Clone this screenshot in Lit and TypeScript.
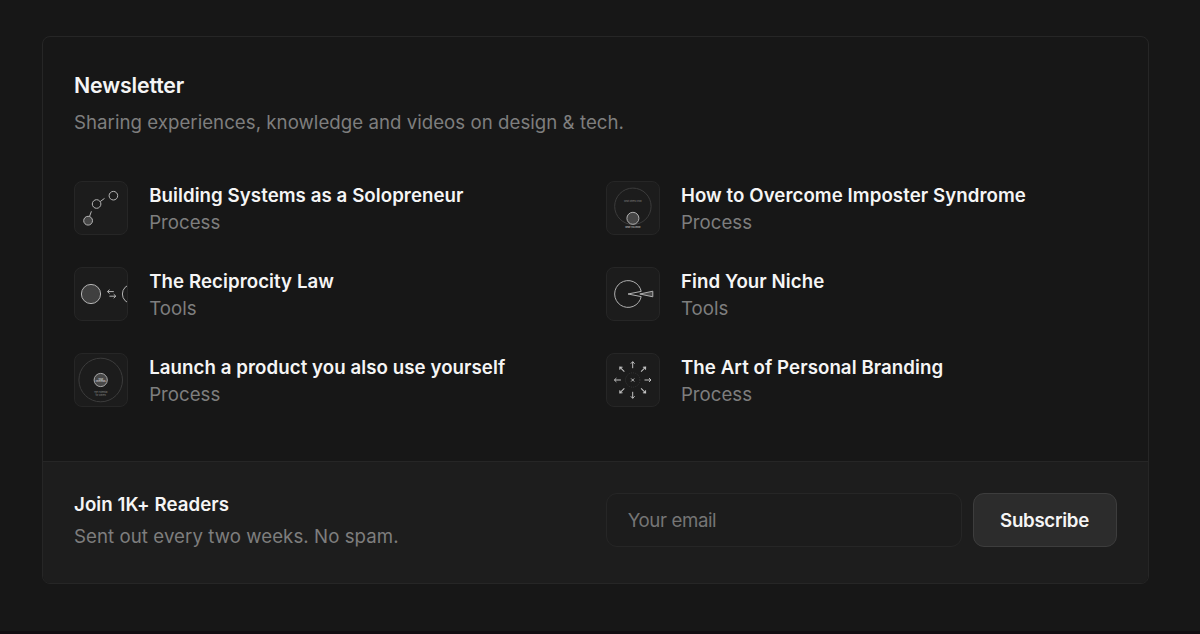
import { LitElement, html, css, svg } from "lit";
import { customElement } from "lit/decorators.js";

const nodes = svg`
  <g fill="none" stroke="#b4b4b4" stroke-width="1">
    <circle cx="39.4" cy="14.7" r="4.3"/><circle cx="22.6" cy="23" r="4.3"/>
    <circle cx="14.1" cy="39.7" r="4.4" fill="#464646"/>
    <path d="M26.3 20.5L30.5 17.4M15.6 35.3L17.4 30.3"/>
  </g>`;

const exchange = svg`
  <g fill="none" stroke="#b4b4b4" stroke-width="1">
    <circle cx="17" cy="27" r="9.6" fill="#404040"/><circle cx="58" cy="27" r="9.6"/>
    <path d="M33.5 24.6H39.8M35.6 22.6L33.5 24.6L35.6 26.6M35.4 29.2H41.8M39.7 27.2L41.8 29.2L39.7 31.2"/>
  </g>`;

const product = svg`
  <circle cx="26.7" cy="27" r="21.8" fill="none" stroke="#3c3c3c"/>
  <circle cx="26.7" cy="27" r="6.6" fill="#484848" stroke="#a8a8a8"/>
  <g text-anchor="middle" font-size="2.3" fill="#d0d0d0" font-weight="600">
    <text x="26.7" y="26.7">Your</text><text x="26.7" y="29">Interests</text>
  </g>
  <g text-anchor="middle" font-size="2.2" fill="#8a8a8a">
    <text x="26.7" y="40.3">The Potential</text><text x="26.7" y="43.1">for Others</text>
  </g>`;

const knowledge = svg`
  <circle cx="26.9" cy="25.3" r="18.2" fill="none" stroke="#3c3c3c"/>
  <circle cx="26.9" cy="37.3" r="6" fill="#464646" stroke="#b0b0b0"/>
  <g text-anchor="middle">
    <text x="26.9" y="21.2" font-size="2.1" fill="#858585">What others know</text>
    <text x="26.9" y="46.9" font-size="2.1" fill="#dedede">What you know</text>
  </g>`;

const niche = svg`
  <g fill="none" stroke="#b0b0b0" stroke-width="1" stroke-linejoin="round">
    <path d="M35.2 24.4A13.4 13.4 0 1 0 35.2 29.6L22 27Z"/>
    <path d="M33.8 27L46.8 24.2V29.8Z" fill="#484848"/>
  </g>`;

const branding = svg`
  <circle cx="26.7" cy="27" r="7.2" fill="none" stroke="#353535" stroke-dasharray="1 1"/>
  <g fill="none" stroke="#c2c2c2" stroke-width="1">
    <path d="M25.2 25.5L28.2 28.5M28.2 25.5L25.2 28.5"/>
    ${[0, 45, 90, 135, 180, 225, 270, 315].map(
      (a) => svg`<path transform="rotate(${a} 26.7 27)" d="M26.7 15.2V8.7M24.8 10.7L26.7 8.7L28.6 10.7"/>`
    )}
  </g>`;

const issues = [
  { title: "Building Systems as a Solopreneur", tag: "Process", art: nodes },
  { title: "How to Overcome Imposter Syndrome", tag: "Process", art: knowledge },
  { title: "The Reciprocity Law", tag: "Tools", art: exchange },
  { title: "Find Your Niche", tag: "Tools", art: niche },
  { title: "Launch a product you also use yourself", tag: "Process", art: product },
  { title: "The Art of Personal Branding", tag: "Process", art: branding },
];

@customElement("app-root")
export class AppRoot extends LitElement {
  static styles = css`
    :host {
      display: block;
      box-sizing: border-box;
      height: 634px;
      padding: 36px 51.5px 0 42px;
      background: #171717;
      border-bottom: 3px solid #120d11;
      font-family: Inter, sans-serif;
      font-size: 18.67px;
      line-height: 27px;
      color: #f5f5f5;
      overflow: hidden;
    }
    * { box-sizing: border-box; }
    .card {
      height: 548px;
      border: 1px solid #262626;
      border-radius: 8px;
      display: flex;
      flex-direction: column;
      overflow: hidden;
    }
    .main { height: 424px; padding: 32px 31px 0; }
    h2 {
      margin: 0;
      font-size: 21.33px;
      line-height: 32px;
      font-weight: 600;
      letter-spacing: -0.14px;
    }
    .sub { margin: 8px 0 0; line-height: 27px; letter-spacing: 0.03px; color: #7e7e7e; }
    .grid {
      display: grid;
      grid-template-columns: 1fr 1fr;
      column-gap: 21px;
      row-gap: 32px;
      margin-top: 45px;
    }
    .item { display: flex; gap: 21.2px; height: 54px; }
    .text { padding-top: 1px; }
    .tile {
      width: 54px;
      height: 54px;
      flex: none;
      border: 1px solid #262626;
      border-radius: 8px;
      background: #1c1c1c;
      overflow: hidden;
    }
    .tile svg { display: block; width: 54px; height: 54px; margin: -1px; }
    .title { font-weight: 600; letter-spacing: 0.07px; white-space: nowrap; }
    .tag { color: #7e7e7e; }
    .foot {
      flex: 1;
      display: grid;
      grid-template-columns: 1fr 1fr;
      column-gap: 21px;
      padding: 31px 31px 0;
      border-top: 1px solid #262626;
      background: #1d1d1d;
    }
    .join { margin-top: -2px; }
    .join .tag { margin-top: 5px; letter-spacing: 0.06px; }
    .form { display: flex; gap: 11px; height: 54px; }
    input {
      flex: 1;
      min-width: 0;
      padding: 0 21px;
      border: 1px solid #262626;
      border-radius: 11px;
      background: #1c1c1c;
      color: #f5f5f5;
      font: inherit;
      letter-spacing: -0.4px;
    }
    input::placeholder { color: #757575; opacity: 1; }
    button {
      width: 144px;
      padding: 0;
      border: 1px solid #3d3d3d;
      border-radius: 11px;
      background: #2c2c2c;
      color: #f5f5f5;
      font: inherit;
      font-weight: 600;
      letter-spacing: -0.3px;
    }
  `;

  render() {
    return html`
      <section class="card">
        <div class="main">
          <h2>Newsletter</h2>
          <p class="sub">Sharing experiences, knowledge and videos on design &amp; tech.</p>
          <div class="grid">
            ${issues.map(
              (i) => html`<article class="item">
                <div class="tile"><svg viewBox="0 0 54 54">${i.art}</svg></div>
                <div class="text"><div class="title">${i.title}</div><div class="tag">${i.tag}</div></div>
              </article>`
            )}
          </div>
        </div>
        <div class="foot">
          <div class="join">
            <div class="title">Join 1K+ Readers</div>
            <div class="tag">Sent out every two weeks. No spam.</div>
          </div>
          <form class="form">
            <input type="email" placeholder="Your email" />
            <button type="button">Subscribe</button>
          </form>
        </div>
      </section>
    `;
  }
}
